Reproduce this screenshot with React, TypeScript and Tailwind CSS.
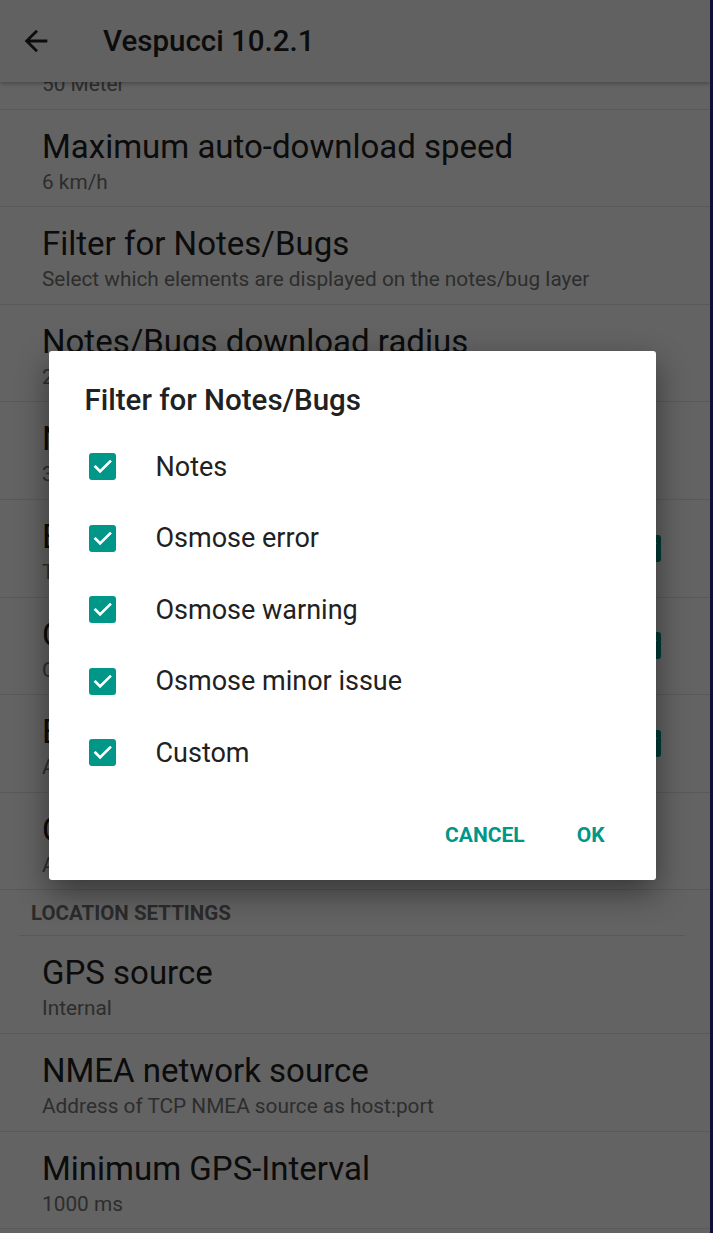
import React from 'react';

type Pref = {
    title: string;
    summary: string;
    checked?: boolean;
};

// prefs above the section header, the first one is scrolled under the toolbar
const advancedPrefs: Pref[] = [
    { title: 'Auto-download radius', summary: '50 Meter' },
    { title: 'Maximum auto-download speed', summary: '6 km/h' },
    { title: 'Filter for Notes/Bugs', summary: 'Select which elements are displayed on the notes/bug layer' },
    { title: 'Notes/Bugs download radius', summary: '200 Meter' },
    { title: 'Notes/Bugs auto-download speed', summary: '30 km/h' },
    { title: 'Enable auto-download', summary: 'Toggle automatic download of Notes and Bugs', checked: true },
    { title: 'Close changesets', summary: 'Close changeset after upload', checked: true },
    { title: 'Enable closed Notes', summary: 'Also show closed Notes and Bugs', checked: true },
    { title: 'Custom Notes server', summary: 'Address of the custom server' },
];

const locationPrefs: Pref[] = [
    { title: 'GPS source', summary: 'Internal' },
    { title: 'NMEA network source', summary: 'Address of TCP NMEA source as host:port' },
    { title: 'Minimum GPS-Interval', summary: '1000 ms' },
];

const filters = ['Notes', 'Osmose error', 'Osmose warning', 'Osmose minor issue', 'Custom'];

function CheckBox() {
    return (
        <div className="w-[27px] h-[27px] shrink-0 rounded-[3px] bg-[#009688]">
            <svg viewBox="0 0 27 27" className="w-[27px] h-[27px]" fill="none">
                <path d="M6.5 13.8l4.6 4.6L21 8.6" stroke="#ffffff" strokeWidth="2.7" strokeLinecap="square" />
            </svg>
        </div>
    );
}

function PrefRow({ pref }: { pref: Pref }) {
    return (
        <div className="h-[97.6px] shrink-0 border-b border-[#e6e6e6] flex items-center justify-between pl-[42px] pr-[49px]">
            <div className="flex flex-col self-start pt-[18px] min-w-0">
                <span className="text-[33px] leading-[38px] text-[#212121] whitespace-nowrap">{pref.title}</span>
                <span className="mt-[4px] text-[20.8px] leading-[24px] text-[#757575] whitespace-nowrap">{pref.summary}</span>
            </div>
            {pref.checked && <CheckBox />}
        </div>
    );
}

export default function App() {
    return (
        <div className="flex w-[713px] h-[1233px] overflow-hidden bg-[#0f0f3a] font-['Roboto',sans-serif]">
            <div className="relative w-[710px] h-full bg-white overflow-hidden">
                {/* Toolbar */}
                <div className="absolute top-0 left-0 right-0 z-10 h-[82px] bg-[#fafafa] shadow-[0_2px_4px_rgba(0,0,0,0.25)] flex items-center">
                    <svg viewBox="0 0 24 24" className="ml-[19px] w-[34px] h-[34px]" fill="#212121">
                        <path d="M20 11H7.83l5.59-5.59L12 4l-8 8 8 8 1.41-1.41L7.83 13H20v-2z" />
                    </svg>
                    <span className="ml-[50px] text-[29.5px] font-medium text-[#212121]">Vespucci 10.2.1</span>
                </div>

                {/* Preference list */}
                <div className="flex flex-col pt-[12px]">
                    {advancedPrefs.map((p) => (
                        <PrefRow key={p.title} pref={p} />
                    ))}
                    <div className="h-[45px] shrink-0 flex items-center pl-[31px] pt-[2px]">
                        <span className="text-[20.5px] font-bold text-[#6f6f6f]">LOCATION SETTINGS</span>
                    </div>
                    <div className="mx-[19px] w-[666px] border-b border-[#e6e6e6]" />
                    {locationPrefs.map((p) => (
                        <PrefRow key={p.title} pref={p} />
                    ))}
                </div>

                {/* Dim + dialog */}
                <div className="absolute inset-0 z-20 bg-black/[0.61] flex items-center justify-center pr-[6px] pb-[2px]">
                    <div className="w-[607px] h-[529px] bg-white rounded-[3px] shadow-[0_12px_32px_rgba(0,0,0,0.45)] flex flex-col">
                        <div className="pl-[36px] pt-[31px] text-[29.5px] leading-[36px] font-medium text-[#212121]">
                            Filter for Notes/Bugs
                        </div>
                        <div className="flex flex-col mt-[13px]">
                            {filters.map((f) => (
                                <div key={f} className="h-[71.5px] flex items-center pl-[40px]">
                                    <CheckBox />
                                    <span className="ml-[40px] text-[27px] text-[#212121]">{f}</span>
                                </div>
                            ))}
                        </div>
                        <div className="mt-auto mb-[29px] flex justify-end items-center pr-[51px] gap-[52px] text-[21px] font-bold text-[#009688]">
                            <span>CANCEL</span>
                            <span>OK</span>
                        </div>
                    </div>
                </div>
            </div>
            <div className="w-[3px] h-full bg-[#0f0f3a]" />
        </div>
    );
}
